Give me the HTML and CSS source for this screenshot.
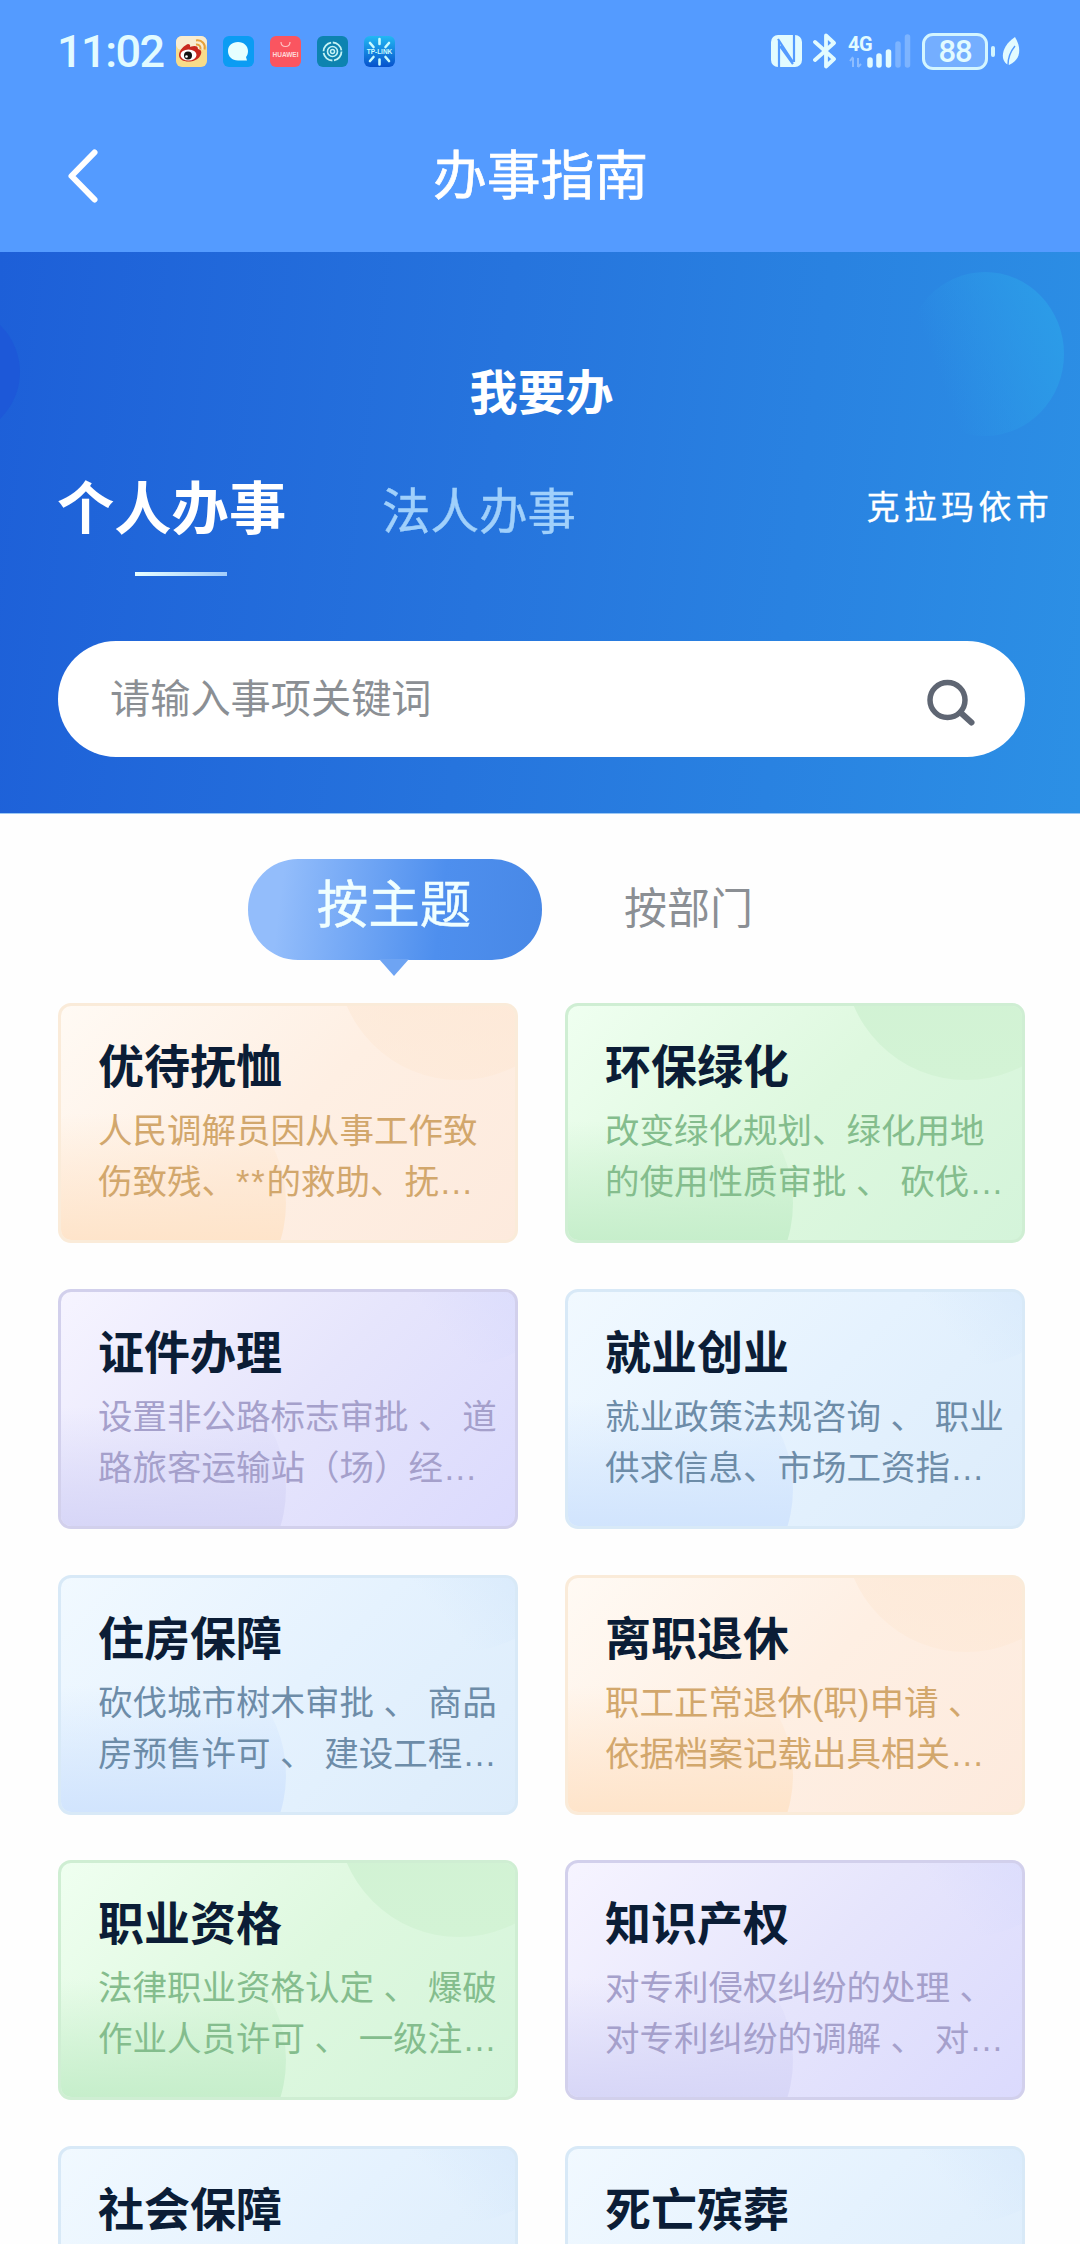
FILE: index.html
```
<!DOCTYPE html>
<html lang="zh-CN">
<head>
  <meta charset="UTF-8">
  <title>办事指南</title>
  <link rel="stylesheet" href="styles.css">
</head>
<body>

<div class="top">
  <div class="status">
    <span class="time">11:02</span>
    <div class="apps">
      <svg width="31" height="31" viewBox="0 0 31 31">
        <rect width="31" height="31" rx="6" fill="#f7dc8a"/>
        <rect width="31" height="14" rx="6" fill="#f8ecd0"/>
        <path d="M3 19c0-5 6-10 9-11 3 0 2 3 2 3s8-3 8 2c4 1 4 4 2 7-3 7-21 8-21-1z" fill="#c8281e"/>
        <ellipse cx="12.500" cy="19" rx="8" ry="5.500" fill="#fff"/>
        <circle cx="12" cy="19.500" r="4" fill="#111"/>
        <circle cx="10.500" cy="20.500" r="1.300" fill="#fff"/>
        <path d="M20 8.500c3-.5 5 2 4.500 5M20 4.500c6-1 10 4 8.500 9" fill="none" stroke="#e5a13c" stroke-width="2"/>
      </svg>
      <svg width="31" height="31" viewBox="0 0 31 31">
        <rect width="31" height="31" rx="6" fill="#0b9cf3"/>
        <path d="M15 6c6 0 10 4 10 9 0 3-1 5-2 6l1 3.500H15c-6 0-10-4-10-9.500S9 6 15 6z" fill="#e6ffff"/>
      </svg>
      <svg width="31" height="31" viewBox="0 0 31 31">
        <rect width="31" height="31" rx="6" fill="#fa5560"/>
        <path d="M11 6c0 6 9 6 9 0" fill="none" stroke="#ffc4c4" stroke-width="1.200"/>
        <text x="15.500" y="20.500" class="huawei">HUAWEI</text>
      </svg>
      <svg width="31" height="31" viewBox="0 0 31 31">
        <rect width="31" height="31" rx="6" fill="#0d83b0"/>
        <g fill="none" stroke="#c5f3f5">
          <circle cx="15.500" cy="15.500" r="9" stroke-width="1.800" stroke-dasharray="12.500 1.640"/>
          <circle cx="15.500" cy="15.500" r="5" stroke-width="1.600"/>
          <circle cx="15.500" cy="15.500" r="2" stroke-width="1.500"/>
        </g>
      </svg>
      <svg width="31" height="31" viewBox="0 0 31 31">
        <defs>
          <linearGradient id="sun" x2="0" y2="1"><stop offset="0" stop-color="#22b8f3"/><stop offset="1" stop-color="#0651cc"/></linearGradient>
        </defs>
        <rect width="31" height="31" rx="6" fill="url(#sun)"/>
        <path d="M15.500 3v5M15.500 23.500v5M6 7l3.500 4M25 7l-3.500 4M6 25l3.500-4M25 25l-3.500-4" stroke="#c9fbff" stroke-width="2.600" stroke-linecap="round"/>
        <text x="15.500" y="18" class="tplink">TP-LINK</text>
      </svg>
    </div>
    <div class="signals">
      <svg width="31" height="32" viewBox="0 0 31 32">
        <rect width="31" height="32" rx="7" fill="#e2fbff"/>
        <path d="M8 32V5M7 4l15 23M23 0v27M9 11l13 18" fill="none" stroke="#549bff" stroke-width="2.200"/>
      </svg>
      <svg class="bt" width="24" height="36" viewBox="0 0 24 36">
        <path d="M2 9l19 17-8 7.500V2.500L21 10 2 27" fill="none" stroke="#e2fbff" stroke-width="3.800" stroke-linejoin="round" stroke-linecap="round"/>
      </svg>
      <svg class="cell" width="63" height="36" viewBox="0 0 63 36">
        <text x="0" y="18" class="net">4G</text>
        <path d="M5 34v-9M2 28l3-4M10 25v9M13 31l-3 3" stroke="#8dbdff" stroke-width="2" fill="none"/>
        <g stroke-width="5.500" stroke-linecap="round">
          <path d="M22 32v-5M31 32v-9M40.500 32V19" stroke="#e2fbff"/>
          <path d="M50 32V11M59.500 32V4" stroke="#7db4ff"/>
        </g>
      </svg>
      <div class="battery">88</div>
      <svg class="leaf" width="18" height="29" viewBox="0 0 18 29">
        <path d="M13 0c6 10 7 22-6 28C-2 25-2 10 13 0z" fill="#e2fbff"/>
        <path d="M13 9C8 15 6 20 6 28" fill="none" stroke="#549bff" stroke-width="1.400"/>
      </svg>
    </div>
  </div>
  <div class="nav">
    <svg class="back" width="34" height="56" viewBox="0 0 34 56">
      <path d="M28.500 4.500L5.500 28l23 23.500" fill="none" stroke="#fff" stroke-width="6" stroke-linecap="round" stroke-linejoin="round"/>
    </svg>
    <h1>办事指南</h1>
  </div>
</div>

<div class="hero">
  <h2>我要办</h2>
  <div class="who">
    <div class="who-item active">个人办事</div>
    <div class="who-item">法人办事</div>
    <div class="city">克拉玛依市</div>
  </div>
  <div class="search">
    <span>请输入事项关键词</span>
    <svg width="50" height="50" viewBox="0 0 50 50">
      <circle cx="20.500" cy="21" r="17.500" fill="none" stroke="#5f6673" stroke-width="5.500"/>
      <path d="M33.500 33.500l11 10" stroke="#5f6673" stroke-width="6" stroke-linecap="round"/>
    </svg>
  </div>
</div>

<div class="tabs">
  <div class="tab selected">按主题</div>
  <div class="tab">按部门</div>
</div>

<div class="cards">
  <div class="card orange">
    <h3>优待抚恤</h3>
    <p>人民调解员因从事工作致<br>伤致残、<span class="stars">**</span>的救助、抚…</p>
  </div>
  <div class="card green">
    <h3>环保绿化</h3>
    <p>改变绿化规划、绿化用地<br>的使用性质审批 、 砍伐…</p>
  </div>
  <div class="card purple">
    <h3>证件办理</h3>
    <p>设置非公路标志审批 、 道<br>路旅客运输站（场）经…</p>
  </div>
  <div class="card blue">
    <h3>就业创业</h3>
    <p>就业政策法规咨询 、 职业<br>供求信息、市场工资指…</p>
  </div>
  <div class="card blue">
    <h3>住房保障</h3>
    <p>砍伐城市树木审批 、 商品<br>房预售许可 、 建设工程…</p>
  </div>
  <div class="card orange">
    <h3>离职退休</h3>
    <p>职工正常退休(职)申请 、<br>依据档案记载出具相关…</p>
  </div>
  <div class="card green">
    <h3>职业资格</h3>
    <p>法律职业资格认定 、 爆破<br>作业人员许可 、 一级注…</p>
  </div>
  <div class="card purple">
    <h3>知识产权</h3>
    <p>对专利侵权纠纷的处理 、<br>对专利纠纷的调解 、 对…</p>
  </div>
  <div class="card blue">
    <h3>社会保障</h3>
  </div>
  <div class="card blue">
    <h3>死亡殡葬</h3>
  </div>
</div>

</body>
</html>
```

FILE: styles.css
```
* {
  box-sizing: border-box;
  margin: 0;
  padding: 0;
}

body {
  width: 1080px;
  height: 2244px;
  overflow: hidden;
  background: #fefefe;
  font-family: "Liberation Sans", "Noto Sans CJK SC", sans-serif;
}

svg {
  display: block;
  flex: none;
}

/* status bar + title */
.top {
  height: 252px;
  background: #549bff;
}

.status {
  display: flex;
  align-items: center;
  height: 102px;
  padding: 0 60px 0 57px;
}

.time {
  width: 119px;
  font-family: Roboto, sans-serif;
  font-size: 45px;
  font-weight: 500;
  letter-spacing: -1.5px;
  color: #e2fbff;
}

.apps {
  display: flex;
  gap: 16px;
}

.huawei {
  font: bold 6.500px "Liberation Sans", sans-serif;
  text-anchor: middle;
  fill: #ffd9d9;
}

.tplink {
  font: bold 6.500px "Liberation Sans", sans-serif;
  text-anchor: middle;
  fill: #c9fbff;
}

.signals {
  display: flex;
  align-items: center;
  margin-left: auto;
}

.bt {
  margin-left: 11px;
}

.cell {
  margin-left: 11px;
  overflow: visible;
}

.net {
  font: bold 20px Roboto, sans-serif;
  letter-spacing: -0.500px;
  fill: #e2fbff;
}

.battery {
  position: relative;
  width: 66px;
  height: 37px;
  margin-left: 11px;
  border: 3px solid #d3f5ff;
  border-radius: 11px;
  background: #74aeff;
  color: #e2fbff;
  font: 500 31px/32px Roboto, sans-serif;
  letter-spacing: -1px;
  text-align: center;
}

.battery::after {
  content: "";
  position: absolute;
  right: -10px;
  top: 10px;
  width: 4px;
  height: 11px;
  border-radius: 2px;
  background: #d3f5ff;
}

.leaf {
  margin-left: 14px;
}

.nav {
  display: grid;
  grid-template-columns: 100px 1fr 100px;
  align-items: center;
  height: 147px;
}

.back {
  margin-left: 66px;
}

.nav h1 {
  padding: 0 0 9px 1px;
  font-size: 53.800px;
  font-weight: 400;
  text-align: center;
  color: #fff;
  -webkit-text-stroke: 0.7px #fff;
}

/* banner */
.hero {
  position: relative;
  height: 562px;
  padding: 107px 55px 0 58px;
  overflow: hidden;
  background: linear-gradient(97deg, #1d5fd8 0%, #2674dd 45%, #2c90e5 100%);
  border-bottom: 1px solid #9cc8f4;
  color: #fff;
}

.hero::before {
  content: "";
  position: absolute;
  left: 906px;
  top: 20px;
  width: 158px;
  height: 164px;
  border-radius: 50%;
  background: linear-gradient(250deg, #2c9de8 5%, rgba(44, 145, 229, 0) 75%);
}

.hero::after {
  content: "";
  position: absolute;
  left: -110px;
  top: 55px;
  width: 130px;
  height: 130px;
  border-radius: 50%;
  background: #1d58d8;
}

.hero h2 {
  height: 70px;
  line-height: 70px;
  font-size: 48px;
  text-align: center;
}

.who {
  display: flex;
  height: 212px;
  margin-right: -33px;
}

.who-item {
  width: 325px;
  padding-top: 43px;
  font-size: 48.500px;
  line-height: 80px;
  color: #a0d0fb;
  -webkit-text-stroke: 0.4px #a0d0fb;
}

.who-item.active {
  margin-left: -1px;
  width: 325px;
  font-size: 57.300px;
  line-height: 74px;
  font-weight: bold;
  color: #fff;
  -webkit-text-stroke: 0;
}

.who-item.active::after {
  content: "";
  display: block;
  width: 92px;
  height: 4px;
  margin: 26px 0 0 78px;
  background: linear-gradient(90deg, #e8ffff, #a3cdfb);
}

.city {
  margin-left: auto;
  padding: 46px 5px 0 0;
  font-size: 33px;
  line-height: 66px;
  letter-spacing: 4.300px;
  -webkit-text-stroke: 0.3px #fff;
}

.search {
  display: flex;
  align-items: center;
  justify-content: space-between;
  height: 116px;
  padding: 0 48px 0 52px;
  border-radius: 58px;
  background: #fff;
  font-size: 40.200px;
  color: #8b8f94;
}

.search span {
  padding-bottom: 7px;
}

.search svg {
  margin-top: 9px;
}

/* topic / department switch */
.tabs {
  display: flex;
  height: 189px;
  padding: 45px 0 0 248px;
}

.tab {
  height: 101px;
  padding-left: 82px;
  font-size: 43px;
  line-height: 100px;
  color: #8b8f94;
}

.tab.selected {
  position: relative;
  width: 294px;
  padding: 0 2px 0 0;
  border-radius: 50px;
  background: linear-gradient(97deg, #93bdfb 12%, #4e8fee 65%, #4888e6 100%);
  font-size: 51.500px;
  line-height: 92px;
  text-align: center;
  color: #f0ffff;
  -webkit-text-stroke: 0.5px #f0ffff;
}

.tab.selected::after {
  content: "";
  position: absolute;
  left: 131px;
  top: 100px;
  border: 15px solid transparent;
  border-top: 17px solid #6ea4f3;
  border-bottom: 0;
}

/* service cards */
.cards {
  display: grid;
  grid-template-columns: 460px 460px;
  grid-auto-rows: 240px;
  gap: 45.800px 47px;
  padding-left: 58px;
}

.card {
  position: relative;
  overflow: hidden;
  padding: 27px 0 0 37px;
  border: 3px solid;
  border-radius: 13px;
}

.card::before,
.card::after {
  content: "";
  position: absolute;
  border-radius: 50%;
}

.card::before {
  left: 276px;
  top: -170px;
  width: 244px;
  height: 244px;
}

.card::after {
  left: -31px;
  top: 69px;
  width: 256px;
  height: 256px;
}

.card h3,
.card p {
  position: relative;
  z-index: 1;
}

.card h3 {
  font-size: 46px;
  line-height: 68px;
  color: #0b1d36;
}

.card p {
  padding-top: 5px;
  font-size: 34.500px;
  line-height: 51px;
  white-space: nowrap;
}

.stars {
  letter-spacing: 1.800px;
}

.orange {
  border-color: #faebd9;
  background: linear-gradient(135deg, #fffaf4, #feefe3 50%, #fdeadd);
}

.orange::before {
  background: linear-gradient(20deg, rgba(253, 232, 212, 0.4), #fde8d6 70%);
}

.orange::after {
  background: linear-gradient(rgba(254, 228, 204, 0) 15%, #fee4ca 65%);
}

.orange p {
  color: #d2a76c;
}

.green {
  border-color: #cfeed3;
  background: linear-gradient(135deg, #effff0, #def8df 50%, #d4f4da);
}

.green::before {
  background: linear-gradient(#cff1d2, #d3f3d5);
}

.green::after {
  background: linear-gradient(rgba(198, 238, 204, 0) 18%, #c6eecb 65%);
}

.green p {
  color: #84bd8d;
}

.purple {
  border-color: #d2d0ec;
  background: linear-gradient(135deg, #f6f4ff, #e6e5fc 50%, #dbdafd);
}

.purple::before {
  background: linear-gradient(50deg, rgba(216, 218, 252, 0) 30%, #d7dafc 75%);
}

.purple::after {
  background: linear-gradient(rgba(214, 213, 247, 0) 18%, #d7d6f7 65%);
}

.purple p {
  color: #a5a0cb;
}

.blue {
  border-color: #d8e9f7;
  background: linear-gradient(135deg, #f1f9ff, #e5f2fe 50%, #dcecfb);
}

.blue::before {
  background: linear-gradient(50deg, rgba(214, 232, 252, 0) 30%, #d4e7fb 75%);
}

.blue::after {
  background: linear-gradient(rgba(210, 229, 254, 0) 15%, #d1e4fd 65%);
}

.blue p {
  color: #6d8ca8;
}
```
